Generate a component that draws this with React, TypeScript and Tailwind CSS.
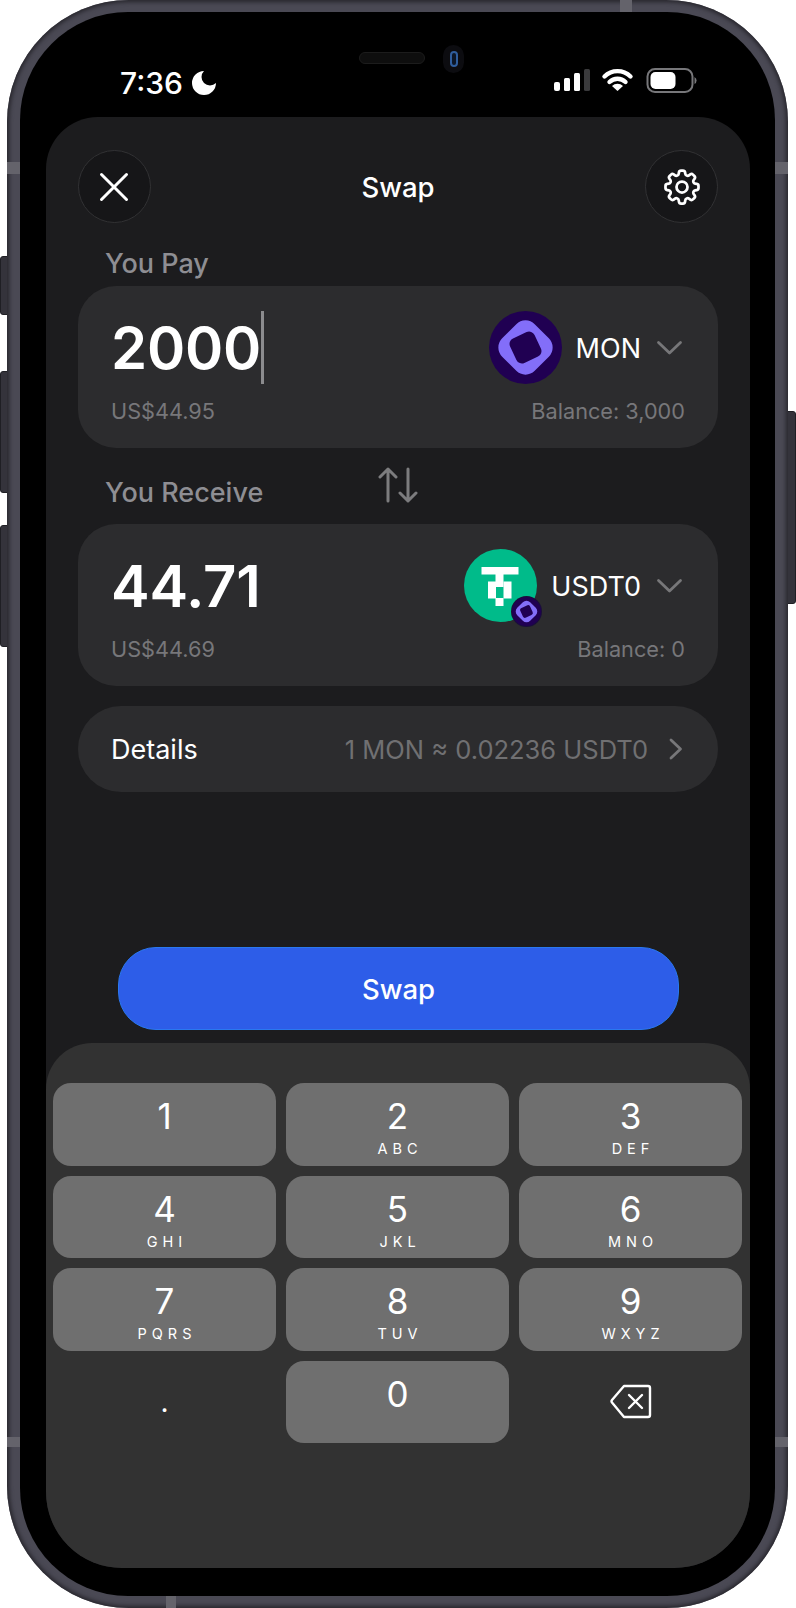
import { HiOutlineCog8Tooth } from "react-icons/hi2";

const keys = [
  ["1", ""],
  ["2", "ABC"],
  ["3", "DEF"],
  ["4", "GHI"],
  ["5", "JKL"],
  ["6", "MNO"],
  ["7", "PQRS"],
  ["8", "TUV"],
  ["9", "WXYZ"],
];

function Chevron() {
  return (
    <svg width="27" height="16" viewBox="0 0 27 16" fill="none" className="shrink-0">
      <path d="M2.5 2.5l11 10.5 11-10.5" stroke="#777779" strokeWidth="2.8" strokeLinecap="round" strokeLinejoin="round" />
    </svg>
  );
}

function MonLogo({ size }: { size: number }) {
  return (
    <svg width={size} height={size} viewBox="0 0 73 73" className="block shrink-0">
      <circle cx="36.5" cy="36.5" r="36.5" fill="#200052" />
      <rect x="13.5" y="13.5" width="46" height="46" rx="13" fill="#836ef9" transform="rotate(45 36.5 36.5)" />
      <rect x="23" y="23" width="27" height="27" rx="6" fill="#200052" transform="rotate(-25 36.5 36.5)" />
    </svg>
  );
}

function UsdtLogo() {
  return (
    <div className="relative h-[73px] w-[73px] shrink-0">
      <svg width="73" height="73" viewBox="0 0 73 73" className="block">
        <circle cx="36.5" cy="36.5" r="36.5" fill="#00bb8a" />
        <g fill="#fff">
          <rect x="17.5" y="18" width="37" height="7.5" />
          <rect x="31.5" y="25" width="8" height="13" />
          <rect x="24" y="32.5" width="8" height="17" />
          <rect x="39.5" y="32.5" width="8" height="17" />
          <rect x="31.5" y="49" width="8" height="8" />
        </g>
      </svg>
      <div className="absolute left-[47px] top-[47px] rounded-full bg-[#1a0f3a] p-[1px]">
        <MonLogo size={29} />
      </div>
    </div>
  );
}

function TokenCard({
  amount,
  usd,
  balance,
  symbol,
  logo,
  cursor,
}: {
  amount: string;
  usd: string;
  balance: string;
  symbol: string;
  logo: React.ReactNode;
  cursor?: boolean;
}) {
  return (
    <div className="rounded-[38px] bg-[#2c2c2e] pb-[23px] pl-[33px] pr-[33px] pt-[25px]">
      <div className="flex h-[73px] items-center">
        <span className="text-[58px] font-semibold leading-none tracking-[-0.2px] text-white">{amount}</span>
        {cursor && <span className="h-[73px] w-[3px] bg-[#8c8c8e]" />}
        <div className="ml-auto flex items-center gap-[14px] pr-[2px]">
          {logo}
          <span className="mt-[2px] text-[27px] leading-none text-white">{symbol}</span>
          <span className="ml-[1px]">
            <Chevron />
          </span>
        </div>
      </div>
      <div className="mt-[13px] flex h-[28px] items-center justify-between text-[21.7px] text-[#77777a]">
        <span>{usd}</span>
        <span>{balance}</span>
      </div>
    </div>
  );
}

export default function App() {
  return (
    <div className="relative h-[1608px] w-[796px] overflow-hidden bg-white font-['Inter','Liberation_Sans',sans-serif]">
      {/* side buttons */}
      <div className="absolute left-0 top-[256px] h-[59px] w-[8px] rounded-l-[3px] border border-[#1f1f24] bg-[#34333b]" />
      <div className="absolute left-0 top-[371px] h-[122px] w-[8px] rounded-l-[3px] border border-[#1f1f24] bg-[#34333b]" />
      <div className="absolute left-0 top-[525px] h-[122px] w-[8px] rounded-l-[3px] border border-[#1f1f24] bg-[#34333b]" />
      <div className="absolute right-0 top-[411px] h-[193px] w-[9px] rounded-r-[3px] border border-[#1f1f24] bg-[#34333b]" />

      {/* device rim */}
      <div className="relative ml-[7px] h-[1608px] w-[781px] rounded-[122px] bg-[#4a4954] pb-[12px] pl-[13px] pr-[13px] pt-[12px] shadow-[inset_0_0_4px_2px_#26252b]">
        {/* antenna bands */}
        <div className="absolute left-0 top-[162px] h-[12px] w-[13px] bg-[#64636b]" />
        <div className="absolute right-0 top-[162px] h-[12px] w-[13px] bg-[#64636b]" />
        <div className="absolute left-0 top-[1437px] h-[10px] w-[13px] bg-[#64636b]" />
        <div className="absolute right-0 top-[1437px] h-[10px] w-[13px] bg-[#64636b]" />
        <div className="absolute left-[613px] top-0 h-[12px] w-[12px] bg-[#64636b]" />
        <div className="absolute bottom-0 left-[159px] h-[12px] w-[10px] bg-[#64636b]" />

        <div className="relative flex h-full flex-col rounded-[108px] bg-black pb-[28px] pl-[26px] pr-[25px]">
          {/* speaker and camera */}
          <div className="absolute left-[339px] top-[40px] h-[12px] w-[66px] rounded-full border border-[#1c1c1c] bg-[#0e0e0e]" />
          <div className="absolute left-[423px] top-[33px] flex h-[28px] w-[21px] items-center justify-center rounded-full bg-[#0c0c10]">
            <div className="h-[16px] w-[8px] rounded-full border-2 border-[#2f5d9c] bg-[#0c1626]" />
          </div>

          {/* status bar */}
          <div className="flex h-[105px] shrink-0 items-start justify-between pl-[74px] pr-[52px] pt-[57px]">
            <div className="flex items-center gap-[9px]">
              <span className="text-[30px] font-medium leading-[28px] text-white">7:36</span>
              <svg width="24" height="24" viewBox="3 3 18 18" fill="#fff">
                <path d="M12 3a6 6 0 0 0 9 9 9 9 0 1 1-9-9Z" />
              </svg>
            </div>
            <svg width="144" height="25" viewBox="0 0 144 25" className="-mt-[1px]">
              <rect x="0" y="14" width="6" height="9" rx="2" fill="#fff" />
              <rect x="10" y="10" width="6" height="13" rx="1.5" fill="#fff" />
              <rect x="20" y="5" width="6" height="18" rx="1.5" fill="#fff" />
              <rect x="30" y="1" width="6" height="22" rx="1.5" fill="#3a3a3c" />
              <path d="M50.5 8.5a18.5 18.5 0 0 1 26 0" stroke="#fff" strokeWidth="4.4" fill="none" strokeLinecap="round" />
              <path d="M55.5 14a11.5 11.5 0 0 1 16 0" stroke="#fff" strokeWidth="4.4" fill="none" strokeLinecap="round" />
              <path d="M63.5 23L58 18a8 8 0 0 1 11 0z" fill="#fff" />
              <rect x="93.5" y="1" width="45" height="23" rx="7.5" fill="none" stroke="#77777a" strokeWidth="2" />
              <rect x="96.5" y="4" width="25" height="17" rx="5" fill="#fff" />
              <path d="M140.5 9a4 4 0 0 1 0 7z" fill="#77777a" />
            </svg>
          </div>

          {/* main panel */}
          <div className="flex min-h-0 flex-1 flex-col overflow-hidden rounded-b-[76px] rounded-t-[52px] bg-[#1c1c1e]">
            <div className="flex flex-1 flex-col pl-[32px] pr-[32px] pt-[33px]">
              <div className="flex items-center justify-between">
                <button className="flex h-[73px] w-[73px] items-center justify-center rounded-full border border-[#323234] bg-[#161618]">
                  <svg width="32" height="32" viewBox="0 0 32 32" fill="none" className="-ml-[1px]">
                    <path d="M3.5 3.5l25 25M28.5 3.5l-25 25" stroke="#fff" strokeWidth="3" strokeLinecap="round" />
                  </svg>
                </button>
                <span className="mt-[2px] text-[27.5px] font-medium leading-none text-white">Swap</span>
                <button className="flex h-[73px] w-[73px] items-center justify-center rounded-full border border-[#323234] bg-[#161618]">
                  <HiOutlineCog8Tooth size={44} color="#fff" />
                </button>
              </div>

              <div className="flex h-[63px] items-center pl-[27px] pt-[19px] text-[27px] font-medium text-[#8e8e93]">You Pay</div>
              <TokenCard amount="2000" usd="US$44.95" balance="Balance: 3,000" symbol="MON" logo={<MonLogo size={73} />} cursor />

              <div className="grid h-[76px] grid-cols-[1fr_auto_1fr] items-center">
                <span className="pl-[27px] pt-[14px] text-[27px] font-medium text-[#8e8e93]">You Receive</span>
                <svg width="42" height="36" viewBox="0 0 42 36" fill="none" className="-mt-[2px]">
                  <path d="M11 34V2M3 10l8-8 8 8M31 2v32M23 26l8 8 8-8" stroke="#7c7c7e" strokeWidth="3" strokeLinecap="round" strokeLinejoin="round" />
                </svg>
                <span />
              </div>
              <TokenCard amount="44.71" usd="US$44.69" balance="Balance: 0" symbol="USDT0" logo={<UsdtLogo />} />

              <div className="mt-[20px] flex h-[86px] items-center rounded-[43px] bg-[#2c2c2e] pl-[33px] pr-[35px]">
                <span className="pt-[2px] text-[27px] text-white">Details</span>
                <span className="ml-auto pt-[2px] text-[25.5px] text-[#707072]">1 MON ≈ 0.02236 USDT0</span>
                <svg width="14" height="22" viewBox="0 0 14 22" fill="none" className="ml-[21px]">
                  <path d="M2 2l9.5 9L2 20" stroke="#777779" strokeWidth="2.8" strokeLinecap="round" strokeLinejoin="round" />
                </svg>
              </div>

              <button className="mb-[13px] ml-[40px] mr-[39px] mt-auto flex h-[83px] items-center justify-center rounded-[38px] border border-[#2a78f0] bg-[#2d5de8] pt-[2px] text-[27.5px] font-medium text-white">
                Swap
              </button>
            </div>

            {/* keypad */}
            <div className="h-[525px] shrink-0 rounded-t-[46px] bg-[#323232] pl-[7px] pr-[8px] pt-[40px]">
              <div className="grid grid-cols-3 gap-[10px]">
                {keys.map(([d, l]) => (
                  <div key={d} className="flex h-[82.5px] flex-col items-center rounded-[18px] bg-[#6f6f6f] text-white">
                    <span className="mt-[13px] h-[40px] text-[35px] leading-[40px]">{d}</span>
                    <span className="mt-[4px] pl-[5px] text-[14.5px] leading-[18px] tracking-[5px]">{l}</span>
                  </div>
                ))}
                <div className="flex h-[82.5px] items-center justify-center text-[28px] text-white">
                  <span className="mt-[1px]">.</span>
                </div>
                <div className="flex h-[82.5px] flex-col items-center rounded-[18px] bg-[#6f6f6f] text-white">
                  <span className="mt-[13px] h-[40px] text-[35px] leading-[40px]">0</span>
                </div>
                <div className="flex h-[82.5px] items-center justify-center">
                  <svg width="42" height="35" viewBox="0 0 42 35" fill="none">
                    <path d="M14 2h24a2 2 0 0 1 2 2v27a2 2 0 0 1-2 2H14L2 18.5a2 2 0 0 1 0-2.5L14 2Z" stroke="#fff" strokeWidth="2.4" strokeLinejoin="round" />
                    <path d="M19 11l13 13M32 11L19 24" stroke="#fff" strokeWidth="2.4" strokeLinecap="round" />
                  </svg>
                </div>
              </div>
            </div>
          </div>
        </div>
      </div>
    </div>
  );
}
